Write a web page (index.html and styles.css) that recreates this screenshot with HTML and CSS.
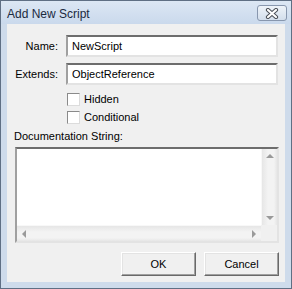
FILE: index.html
```html
<!DOCTYPE html>
<html lang="en">
<head>
  <meta charset="UTF-8" />
  <title>Add New Script</title>
  <link rel="stylesheet" href="styles.css">
</head>
<body>
  <div class="window">
    <div class="titlebar">
      <span class="title">Add New Script</span>
      <button class="close" aria-label="Close">
        <svg width="14" height="11" viewBox="0 0 14 11">
          <path d="M3 2 L11 9 M11 2 L3 9" stroke="#4a4f57" stroke-width="4.2" stroke-linecap="round" fill="none"/>
          <path d="M3 2 L11 9 M11 2 L3 9" stroke="#fff" stroke-width="2.2" stroke-linecap="round" fill="none"/>
        </svg>
      </button>
    </div>

    <div class="client">
      <div class="row first">
        <label class="lbl" for="name">Name:</label>
        <input class="field" id="name" type="text" value="NewScript" />
      </div>
      <div class="row">
        <label class="lbl" for="extends">Extends:</label>
        <input class="field" id="extends" type="text" value="ObjectReference" />
      </div>

      <label class="check first-check"><span class="box"></span>Hidden</label>
      <label class="check"><span class="box"></span>Conditional</label>

      <div class="doc-label">Documentation String:</div>
      <div class="doc">
        <div class="doc-text"></div>
        <div class="vscroll">
          <span class="arrow up"></span>
          <span class="arrow down"></span>
        </div>
        <div class="hscroll">
          <span class="arrow left"></span>
          <span class="arrow right"></span>
        </div>
        <div class="corner"></div>
      </div>

      <div class="buttons">
        <button class="btn">OK</button>
        <button class="btn">Cancel</button>
      </div>
    </div>
  </div>
</body>
</html>
```

FILE: styles.css
```css
body { margin: 0; background: #f0f0f0; font-family: "Liberation Sans", Arial, sans-serif; font-size: 11px; color: #000; }
.window { width: 292px; height: 289px; box-sizing: border-box; border: 1px solid #5f6f84; background: #cedbeb; padding: 0 6px 6px 6px; display: flex; flex-direction: column; }
.titlebar { height: 23px; display: flex; align-items: flex-start; justify-content: space-between; background: linear-gradient(#dce7f4, #cad9ec); margin: 0 -6px; padding: 0 4px 0 6px; }
.title { font-size: 12px; line-height: 14px; margin-top: 6px; color: #1b2a3e; }
.close { width: 30px; height: 16px; margin-top: 4px; padding: 0; border: 1px solid #8897ae; border-radius: 3px; background: linear-gradient(#eef3f9, #d3deec); display: flex; align-items: center; justify-content: center; }
.client { flex: 1; background: #f0f0f0; border: 1px solid #b9c6d6; border-width: 0 0 0 0; display: flex; flex-direction: column; }

.row { display: flex; align-items: center; margin-top: 6px; }
.row.first { margin-top: 11px; }
.lbl { width: 51px; text-align: right; margin-right: 8px; }
.field { width: 212px; height: 22px; box-sizing: border-box; margin: 0; padding: 0 4px; font: inherit; border: 2px solid; border-color: #7a7a7a #e3e3e3 #e3e3e3 #a0a0a0; border-top-color: #6d6d6d; background: #fff; outline: none; }

.check { display: flex; align-items: center; margin-left: 60px; height: 13px; line-height: 13px; margin-top: 5px; }
.check.first-check { margin-top: 8px; }
.box { width: 13px; height: 13px; box-sizing: border-box; border: 1px solid; border-color: #8a8a8a #dcdcdc #dcdcdc #8a8a8a; background: #fff; margin-right: 4px; }

.doc-label { margin: 6px 0 0 7px; line-height: 13px; }
.doc { margin: 4px 6px 0 8px; height: 96px; box-sizing: border-box; border: 2px solid; border-color: #6d6d6d #e3e3e3 #e3e3e3 #a0a0a0; display: grid; grid-template-columns: 1fr 16px; grid-template-rows: 1fr 16px; background: #fff; }
.doc-text { background: #fff; }
.vscroll { background: linear-gradient(90deg, #e6e6e6, #f3f3f3 40%, #f3f3f3 80%, #e6e6e6); border-left: 1px solid #f8f8f8; display: flex; flex-direction: column; justify-content: space-between; align-items: center; padding: 5px 0; }
.hscroll { background: linear-gradient(#e6e6e6, #f3f3f3 40%, #f3f3f3 80%, #e6e6e6); border-top: 1px solid #f8f8f8; display: flex; justify-content: space-between; align-items: center; padding: 0 5px; }
.corner { background: #f0f0f0; }
.arrow { width: 0; height: 0; border: 3px solid transparent; }
.arrow.up { border-bottom: 4px solid #9a9a9a; border-top-width: 0; border-left-width: 4px; border-right-width: 4px; }
.arrow.down { border-top: 4px solid #9a9a9a; border-bottom-width: 0; border-left-width: 4px; border-right-width: 4px; }
.arrow.left { border-right: 4px solid #9a9a9a; border-left-width: 0; border-top-width: 4px; border-bottom-width: 4px; }
.arrow.right { border-left: 4px solid #9a9a9a; border-right-width: 0; border-top-width: 4px; border-bottom-width: 4px; }

.buttons { display: flex; justify-content: flex-end; gap: 8px; margin: 9px 6px 0 0; }
.btn { width: 75px; height: 24px; box-sizing: border-box; margin: 0; padding: 0; font: inherit; color: #000; background: #f0f0f0; border: 1px solid; border-color: #fff #696969 #696969 #fff; box-shadow: inset -1px -1px 0 #a0a0a0, inset 1px 1px 0 #e3e3e3; }
```
